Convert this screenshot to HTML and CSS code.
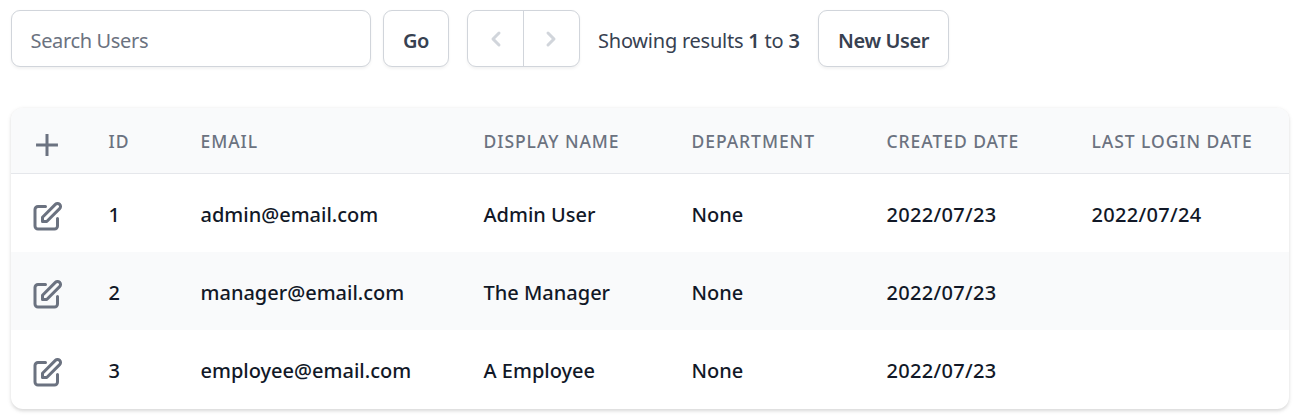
FILE: index.html
```html
<!DOCTYPE html>
<html lang="en">
<head>
<meta charset="utf-8">
<title>Users</title>
<link rel="stylesheet" href="styles.css">
</head>
<body>
<svg class="symbols" aria-hidden="true">
  <symbol id="edit" viewBox="0 0 24 24"><path d="M11 5H6a2 2 0 00-2 2v11a2 2 0 002 2h11a2 2 0 002-2v-5m-1.414-9.414a2 2 0 112.828 2.828L11.828 15H9v-2.828l8.586-8.586z"/></symbol>
</svg>
<div class="toolbar">
  <input class="search" type="text" placeholder="Search Users">
  <button class="btn go">Go</button>
  <nav class="pager">
    <button class="page"><svg viewBox="0 0 20 20"><path d="M12.707 5.293a1 1 0 010 1.414L9.414 10l3.293 3.293a1 1 0 01-1.414 1.414l-4-4a1 1 0 010-1.414l4-4a1 1 0 011.414 0z"/></svg></button>
    <button class="page"><svg viewBox="0 0 20 20"><path d="M7.293 14.707a1 1 0 010-1.414L10.586 10 7.293 6.707a1 1 0 011.414-1.414l4 4a1 1 0 010 1.414l-4 4a1 1 0 01-1.414 0z"/></svg></button>
  </nav>
  <p class="results">Showing results <b>1</b> to <b>3</b></p>
  <button class="btn new">New User</button>
</div>
<div class="card">
  <table class="users">
    <colgroup><col class="c-act"><col class="c-id"><col class="c-email"><col class="c-name"><col class="c-dept"><col class="c-created"><col class="c-login"></colgroup>
    <thead>
      <tr><th class="action"><svg class="icon plus" viewBox="0 0 24 24"><path d="M12 4.7v14.6M19.3 12H4.7"/></svg></th><th>ID</th><th>Email</th><th>Display Name</th><th>Department</th><th>Created Date</th><th>Last Login Date</th></tr>
    </thead>
    <tbody>
      <tr><td class="action"><svg class="icon"><use href="#edit"/></svg></td><td>1</td><td>admin@email.com</td><td>Admin User</td><td>None</td><td class="date">2022/07/23</td><td class="date">2022/07/24</td></tr>
      <tr><td class="action"><svg class="icon"><use href="#edit"/></svg></td><td>2</td><td>manager@email.com</td><td>The Manager</td><td>None</td><td class="date">2022/07/23</td><td></td></tr>
      <tr><td class="action"><svg class="icon"><use href="#edit"/></svg></td><td>3</td><td>employee@email.com</td><td>A Employee</td><td>None</td><td class="date">2022/07/23</td><td></td></tr>
    </tbody>
  </table>
</div>
</body>
</html>
```
FILE: styles.css
```css
* { box-sizing: border-box; }
body { margin: 0; padding: 10px 11px; background: #fff; font-family: "Noto Sans", sans-serif; font-size: 20px; color: #111827; }
.symbols { display: none; }
button, input { font: inherit; }
.toolbar { display: flex; height: 57px; }
.search, .btn, .pager { border: 1px solid #d1d5db; border-radius: 9px; background: #fff; box-shadow: 0 1.5px 3px rgba(0,0,0,.05); }
.search { width: 360px; padding: 3px 18px 0 18.5px; letter-spacing: -.35px; }
.search::placeholder { color: #6b7280; opacity: 1; }
.btn { padding: 3px 0 0; color: #374151; font-weight: 600; letter-spacing: -.4px; }
.go { width: 66px; margin-left: 12px; }
.new { width: 131px; margin-left: 18px; }
.pager { display: flex; width: 113px; margin-left: 18px; }
.page { flex: 0 0 55px; display: flex; align-items: center; justify-content: center; padding: 0 0 0 1px; border: 0; background: none; }
.page + .page { flex-basis: 56px; padding: 0 1px 0 0; border-left: 1px solid #d1d5db; }
.page svg { flex: none; width: 30px; height: 30px; fill: #d1d5db; }
.results { width: 202px; margin: 0 0 0 18px; padding-top: 3px; line-height: 56px; color: #374151; white-space: nowrap; letter-spacing: -.23px; }
.results b { font-weight: 600; }
.card { margin-top: 41px; height: 301px; border-radius: 12px; overflow: hidden; box-shadow: 0 1.5px 4.5px rgba(0,0,0,.1), 0 1.5px 3px rgba(0,0,0,.06); }
.users { width: 1278px; table-layout: fixed; border-collapse: separate; border-spacing: 0; }
.c-act { width: 79px; } .c-id { width: 92px; } .c-email { width: 283px; } .c-name { width: 208px; }
.c-dept { width: 195px; } .c-created { width: 205px; } .c-login { width: 216px; }
th, td { text-align: left; padding: 0 0 0 18.5px; white-space: nowrap; }
th { height: 66px; background: #f9fafb; border-bottom: 1px solid #e5e7eb; color: #6b7280; font-size: 17.5px; font-weight: 500; text-transform: uppercase; letter-spacing: .95px; }
td { height: 78px; padding-top: 3px; font-weight: 500; letter-spacing: 0; }
.date { letter-spacing: .3px; }
tbody tr:nth-child(even) { background: #f9fafb; }
.action { padding: 8px 0 0 18px; }
.icon { display: block; width: 36px; height: 36px; fill: none; stroke: #6b7280; stroke-width: 2; stroke-linecap: round; stroke-linejoin: round; }
.plus { stroke-linecap: butt; }
```
